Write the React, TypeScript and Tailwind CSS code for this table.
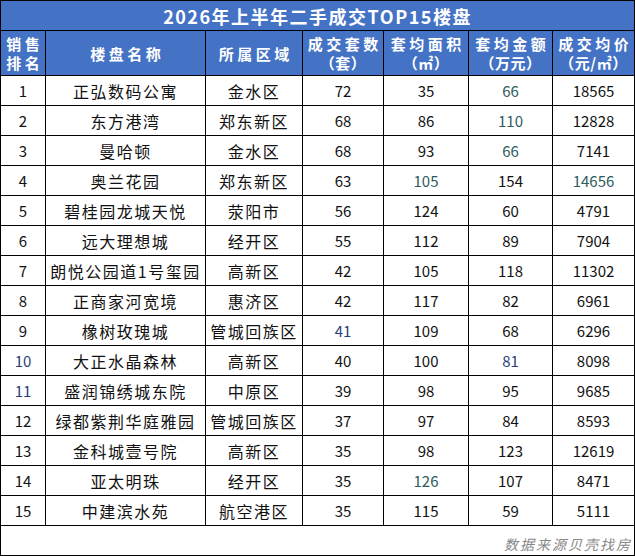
const cols = [45, 160, 97, 81, 85, 84, 82];

const TEAL = 'text-[#2e5c5c]';
const NAVY = 'text-[#2a3f7a]';

type Cell = string | { v: string; c: string };

const rows: Cell[][] = [
  ['1', '正弘数码公寓', '金水区', '72', '35', { v: '66', c: TEAL }, '18565'],
  ['2', '东方港湾', '郑东新区', '68', '86', { v: '110', c: TEAL }, '12828'],
  ['3', '曼哈顿', '金水区', '68', '93', { v: '66', c: TEAL }, '7141'],
  ['4', '奥兰花园', '郑东新区', '63', { v: '105', c: TEAL }, '154', { v: '14656', c: TEAL }],
  ['5', '碧桂园龙城天悦', '荥阳市', '56', '124', '60', '4791'],
  ['6', '远大理想城', '经开区', '55', '112', '89', '7904'],
  ['7', '朗悦公园道1号玺园', '高新区', '42', '105', '118', '11302'],
  ['8', '正商家河宽境', '惠济区', '42', '117', '82', '6961'],
  ['9', '橡树玫瑰城', '管城回族区', { v: '41', c: NAVY }, '109', '68', '6296'],
  [{ v: '10', c: NAVY }, '大正水晶森林', '高新区', '40', '100', { v: '81', c: NAVY }, '8098'],
  [{ v: '11', c: NAVY }, '盛润锦绣城东院', '中原区', '39', '98', '95', '9685'],
  ['12', '绿都紫荆华庭雅园', '管城回族区', '37', '97', '84', '8593'],
  ['13', '金科城壹号院', '高新区', '35', '98', '123', '12619'],
  ['14', '亚太明珠', '经开区', '35', { v: '126', c: TEAL }, '107', '8471'],
  ['15', '中建滨水苑', '航空港区', '35', '115', '59', '5111'],
];

const head = [
  ['销售', '排名'],
  ['楼盘名称'],
  ['所属区域'],
  ['成交套数', '（套）'],
  ['套均面积', '（㎡）'],
  ['套均金额', '（万元）'],
  ['成交均价', '（元/㎡）'],
];

const App = () => {
  return (
    <div className="w-[635px] h-[556px] bg-white overflow-hidden font-['Noto_Sans_CJK_SC',sans-serif]">
      <table className="table-fixed border-collapse w-[634px]">
        <colgroup>
          {cols.map((w, i) => (
            <col key={i} style={{ width: w }} />
          ))}
        </colgroup>
        <tbody>
          <tr className="h-[30px]">
            <td
              colSpan={7}
              className="border border-black bg-[#4472c4] text-white text-center font-bold text-[18px] leading-none tracking-[1.5px]"
            >
              2026年上半年二手成交TOP15楼盘
            </td>
          </tr>
          <tr className="h-[45px]">
            {head.map((h, i) => (
              <td
                key={i}
                className="border border-black bg-[#4472c4] text-white text-center font-bold text-[15px] leading-[19px] p-0 whitespace-nowrap"
              >
                {h.map((t, j) => (
                  <div
                    key={j}
                    className={t.startsWith('（') ? 'tracking-[0.5px]' : 'tracking-[3.5px] -mr-[3.5px]'}
                  >
                    {t}
                  </div>
                ))}
              </td>
            ))}
          </tr>
          {rows.map((r, i) => (
            <tr key={i} className="h-[30px]">
              {r.map((c, j) => {
                const v = typeof c === 'string' ? c : c.v;
                const color = typeof c === 'string' ? 'text-[#111]' : c.c;
                return (
                  <td
                    key={j}
                    className={`border border-black text-center p-0 leading-none whitespace-nowrap ${color} ${
                      j === 1 || j === 2 ? 'text-[16px] tracking-[1.5px]' : 'text-[15px]'
                    }`}
                  >
                    {v}
                  </td>
                );
              })}
            </tr>
          ))}
          <tr className="h-[30px]">
            <td
              colSpan={7}
              className="border border-black text-right align-bottom pr-[2px] pb-[4px] text-[14px] italic text-[#888] tracking-[2px] leading-none"
            >
              数据来源贝壳找房
            </td>
          </tr>
        </tbody>
      </table>
    </div>
  );
};

export default App;
